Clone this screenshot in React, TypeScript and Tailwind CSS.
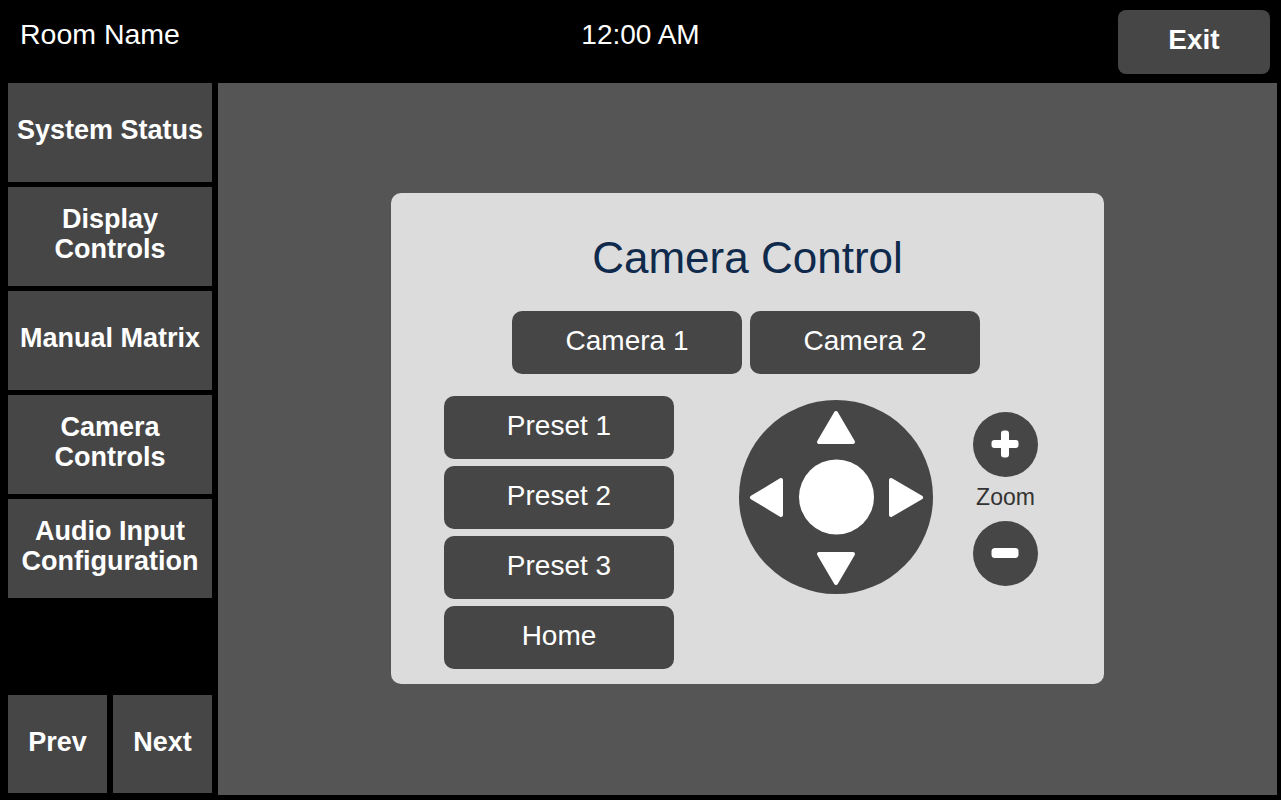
import type { ReactNode } from "react";

const font = { fontFamily: '"Liberation Sans", Arial, sans-serif' };

const navItems = [
  ["System Status"],
  ["Display", "Controls"],
  ["Manual Matrix"],
  ["Camera", "Controls"],
  ["Audio Input", "Configuration"],
];

const presets = ["Preset 1", "Preset 2", "Preset 3", "Home"];

function SideButton({ children, className = "" }: { children: ReactNode; className?: string }) {
  return (
    <button
      type="button"
      className={`flex flex-col items-center justify-center bg-[#464646] pb-[5px] text-[27px] font-bold leading-[30px] text-white ${className}`}
    >
      {children}
    </button>
  );
}

function PanelButton({ label, className = "" }: { label: string; className?: string }) {
  return (
    <button
      type="button"
      className={`h-[63px] w-[230px] rounded-[10px] bg-[#464646] pb-[4px] text-[28px] leading-none text-white ${className}`}
    >
      {label}
    </button>
  );
}

function Joystick() {
  const tri = "white";
  return (
    <svg width="194" height="194" viewBox="0 0 194 194" className="mt-[4px] ml-[65px] shrink-0">
      <circle cx="97" cy="97" r="97" fill="#464646" />
      <circle cx="97.5" cy="97" r="37.5" fill="white" />
      <polygon points="97,13 80,42 114,42" fill={tri} stroke={tri} strokeWidth="4" strokeLinejoin="round" />
      <polygon points="97,183 80,154 114,154" fill={tri} stroke={tri} strokeWidth="4" strokeLinejoin="round" />
      <polygon points="13,97.5 42,80 42,115" fill={tri} stroke={tri} strokeWidth="4" strokeLinejoin="round" />
      <polygon points="182,97.5 152,80 152,115" fill={tri} stroke={tri} strokeWidth="4" strokeLinejoin="round" />
    </svg>
  );
}

function ZoomControls() {
  return (
    <div className="mt-[16px] ml-[40px] flex w-[65px] flex-col items-center">
      <button type="button" className="h-[65px] w-[65px] rounded-full bg-[#464646]">
        <svg width="65" height="65" viewBox="0 0 65 65">
          <rect x="18.5" y="28" width="27" height="8" rx="3" fill="white" />
          <rect x="28" y="18.5" width="8" height="27" rx="3" fill="white" />
        </svg>
      </button>
      <div className="h-[44px] pb-[4px] text-[23px] leading-[40px] text-[#333333]">Zoom</div>
      <button type="button" className="h-[65px] w-[65px] rounded-full bg-[#464646]">
        <svg width="65" height="65" viewBox="0 0 65 65">
          <rect x="18.5" y="27" width="27" height="10" rx="3.5" fill="white" />
        </svg>
      </button>
    </div>
  );
}

export default function App() {
  return (
    <div className="flex h-[800px] w-[1281px] flex-col overflow-hidden bg-black" style={font}>
      <header className="grid h-[83px] grid-cols-3 text-white">
        <div className="pl-[20px] text-[28.5px] leading-[68px]">Room Name</div>
        <div className="text-center text-[28px] leading-[70px]">12:00 AM</div>
        <div className="flex justify-end pt-[10px] pr-[11px]">
          <button
            type="button"
            className="h-[64px] w-[152px] rounded-[8px] bg-[#464646] pb-[4px] text-[28px] font-bold text-white"
          >
            Exit
          </button>
        </div>
      </header>

      <div className="flex h-[712px]">
        <nav className="ml-[8px] flex w-[204px] flex-col gap-[5px]">
          {navItems.map((lines) => (
            <SideButton key={lines.join(" ")} className="h-[99px]">
              {lines.map((line) => (
                <span key={line}>{line}</span>
              ))}
            </SideButton>
          ))}
          <div className="mt-auto mb-[2px] flex h-[98px] gap-[6px]">
            <SideButton className="flex-1">Prev</SideButton>
            <SideButton className="flex-1">Next</SideButton>
          </div>
        </nav>

        <main className="ml-[6px] flex w-[1059px] justify-center bg-[#555555]">
          <section className="mt-[110px] h-[491px] w-[713px] rounded-[10px] bg-[#dcdcdc]">
            <h1 className="pt-[40px] text-center text-[44px] leading-[50px] text-[#102a4c]">
              Camera Control
            </h1>
            <div className="mt-[28px] ml-[121px] flex gap-[8px]">
              <PanelButton label="Camera 1" />
              <PanelButton label="Camera 2" />
            </div>
            <div className="mt-[22px] flex">
              <div className="ml-[53px] flex flex-col gap-[7px]">
                {presets.map((p) => (
                  <PanelButton key={p} label={p} />
                ))}
              </div>
              <Joystick />
              <ZoomControls />
            </div>
          </section>
        </main>
      </div>
    </div>
  );
}
